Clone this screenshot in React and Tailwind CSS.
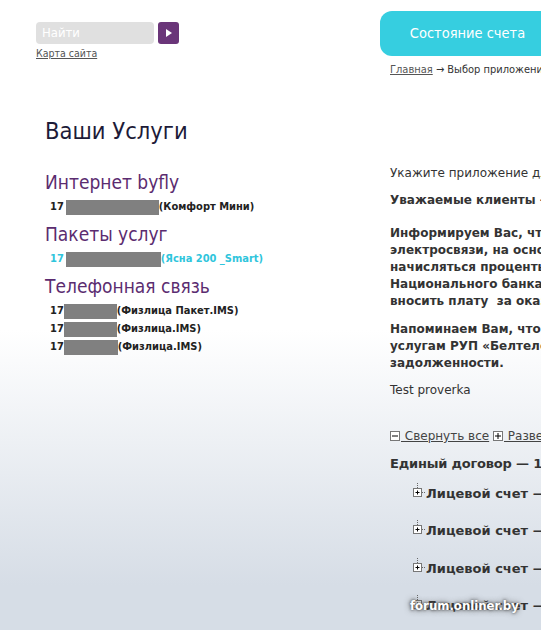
import React from "react";

const F = { fontFamily: '"DejaVu Sans", Verdana, sans-serif' };
const C = '[font-family:"DejaVu_Sans_Condensed","DejaVu_Sans",sans-serif]';

function Masked({ prefix, w, text, cyan, gap }) {
  return (
    <div className={`h-[18px] flex items-center pl-[5px] text-[11px] font-bold whitespace-nowrap ${C} ${cyan ? "text-[#2fc5dc]" : "text-[#222]"}`}>
      <span>{prefix}</span>
      <span className={`inline-block h-[15px] bg-[#808080] ${w} ${gap ? "ml-[2px]" : ""}`}></span>
      <span>{text}</span>
    </div>
  );
}

function Heading({ children, first }) {
  return (
    <div className={`${first ? "mt-[19px]" : "mt-[3px]"} mb-[1px] h-[30px] flex items-center text-[19px] text-[#5b2c70] whitespace-nowrap ${C}`}>
      {children}
    </div>
  );
}

function Plus() {
  return (
    <svg width="14" height="16" viewBox="0 0 14 16" className="shrink-0">
      <line x1="5.5" y1="0" x2="5.5" y2="5" stroke="#666" strokeWidth="1" strokeDasharray="1 1" />
      <rect x="1.5" y="5.5" width="8" height="8" fill="#fff" stroke="#777" />
      <line x1="3.5" y1="9.5" x2="7.5" y2="9.5" stroke="#000" />
      <line x1="5.5" y1="7.5" x2="5.5" y2="11.5" stroke="#000" />
      <line x1="10" y1="9.5" x2="14" y2="9.5" stroke="#666" strokeDasharray="1 1" />
    </svg>
  );
}

function BoxIcon({ minus }) {
  return (
    <svg width="10" height="10" viewBox="0 0 10 10" className="inline-block mr-[1px] align-[-1px]">
      <rect x="0.5" y="0.5" width="9" height="9" fill="#fff" stroke="#777" />
      <line x1="2" y1="5" x2="8" y2="5" stroke="#000" />
      {!minus && <line x1="5" y1="2" x2="5" y2="8" stroke="#000" />}
    </svg>
  );
}

function Account() {
  return (
    <div className="h-[37.5px] flex items-end pl-[22px] whitespace-nowrap">
      <Plus />
      <span className="font-bold text-[13px] text-[#333] leading-[16px] -mb-[3px]">Лицевой счет — 17XXXXXXXXX</span>
    </div>
  );
}

export default function App() {
  return (
    <div
      style={F}
      className="relative w-[541px] h-[630px] overflow-hidden bg-[linear-gradient(to_bottom,#ffffff_330px,#d6dde6_585px)]"
    >
      <div className="flex">
        {/* left column */}
        <div className="w-[380px] shrink-0 pl-[36px] pt-[22px]">
          <div className="flex items-center gap-[4px]">
            <div className={`w-[118px] h-[22px] rounded-[4px] bg-[#e0e0e0] flex items-center pl-[6px] text-[13px] text-white ${C}`}>
              Найти
            </div>
            <div className="w-[21px] h-[22px] rounded-[3px] bg-[#6a3579] flex items-center justify-center">
              <svg width="6" height="8" viewBox="0 0 6 8">
                <polygon points="0,0 6,4 0,8" fill="#fff" />
              </svg>
            </div>
          </div>
          <div className={`mt-[2px] h-[14px] flex items-center text-[10.5px] text-[#555] underline leading-none ${C}`}>
            Карта сайта
          </div>

          <div className="pl-[9px] mt-[56px]">
            <div className={`h-[32px] flex items-center text-[23.5px] text-[#1d1b38] whitespace-nowrap ${C}`}>Ваши Услуги</div>
            <Heading first>Интернет byfly</Heading>
            <Masked prefix="17" w="w-[93px]" text="(Комфорт Мини)" gap />
            <Heading>Пакеты услуг</Heading>
            <Masked prefix="17" w="w-[95px]" text="(Ясна 200 _Smart)" cyan gap />
            <Heading>Телефонная связь</Heading>
            <Masked prefix="17" w="w-[53px]" text="(Физлица Пакет.IMS)" />
            <Masked prefix="17" w="w-[53px]" text="(Физлица.IMS)" />
            <Masked prefix="17" w="w-[54px]" text="(Физлица.IMS)" />
          </div>
        </div>

        {/* right column */}
        <div className="shrink-0 w-[400px] pt-[11px]">
          <div className={`w-[175px] h-[45px] rounded-[12px] bg-[#36cee0] flex items-center justify-center text-white text-[14.5px] whitespace-nowrap ${C}`}>
            Состояние счета
          </div>
          <div className={`pl-[10px] mt-[7px] h-[14px] flex items-center text-[11px] text-[#333] whitespace-nowrap ${C}`}>
            <span className="underline text-[#555]">Главная</span>
            <span>&nbsp;→ Выбор приложения</span>
          </div>

          <div className="pl-[10px] mt-[88px] text-[12px] text-[#333] whitespace-nowrap">
            <div className="h-[16px] flex items-center">Укажите приложение для просмотра</div>
            <div className="mt-[11px] h-[16px] flex items-center font-bold">Уважаемые клиенты — абоненты!</div>
            <div className="mt-[17px] font-bold leading-[17px]">
              <div>Информируем Вас, что в соответствии с Правилами оказания услуг</div>
              <div>электросвязи, на основании договора за несвоевременную оплату будут</div>
              <div>начисляться проценты в размере ставки рефинансирования</div>
              <div>Национального банка Республики Беларусь. Просим своевременно</div>
              <div>вносить плату&nbsp; за оказанные услуги.</div>
            </div>
            <div className="mt-[11px] font-bold leading-[17px]">
              <div>Напоминаем Вам, что Вы можете проверить состояние расчетов по</div>
              <div>услугам РУП «Белтелеком» и своевременно погасить сумму</div>
              <div>задолженности.</div>
            </div>
            <div className="mt-[9px] h-[17px] flex items-center">Test proverka</div>

            <div className="mt-[30px] h-[16px] flex items-center text-[#444]">
              <BoxIcon minus />
              <span className="underline">&nbsp;Свернуть все</span>
              <span>&nbsp;</span>
              <BoxIcon />
              <span className="underline">&nbsp;Развернуть все</span>
            </div>
            <div className="mt-[12px] h-[16px] flex items-center font-bold text-[13px] text-[#333] tracking-[-0.2px]">
              Единый договор — 17XXXXXXXXX
            </div>
            <div className="-mt-[11px]">
              <Account />
              <Account />
              <Account />
              <Account />
            </div>
          </div>
        </div>
      </div>

      <div className={`absolute left-[410px] top-[596px] text-[13px] font-bold text-white whitespace-nowrap [text-shadow:0_0_3px_#333,0_0_6px_#555] ${C}`}>
        forum.onliner.by
      </div>
    </div>
  );
}
